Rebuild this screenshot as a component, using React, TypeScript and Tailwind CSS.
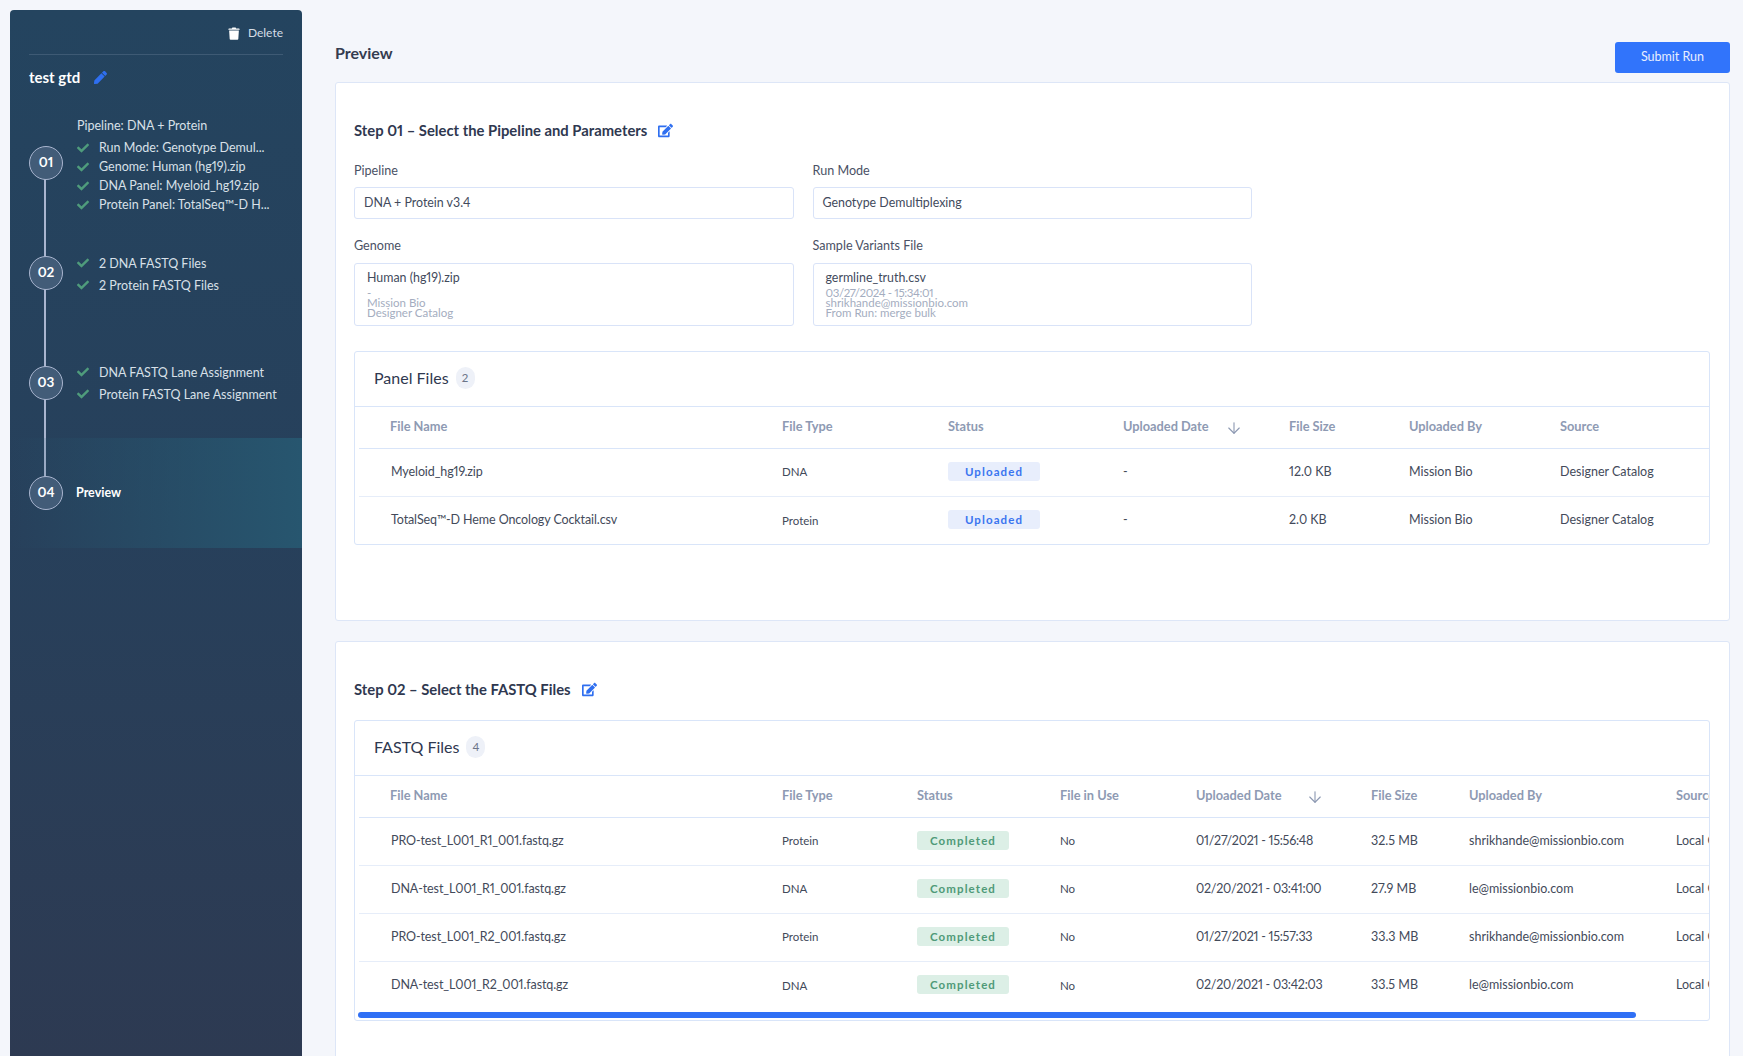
import { ArrowDown } from "lucide-react";
import { FaCheck, FaPen, FaEdit } from "react-icons/fa";

const steps = [
  {
    num: "01",
    lead: "Pipeline: DNA + Protein",
    items: [
      "Run Mode: Genotype Demul...",
      "Genome: Human (hg19).zip",
      "DNA Panel: Myeloid_hg19.zip",
      "Protein Panel: TotalSeq™-D H...",
    ],
    gap: "gap-y-[4px] pt-[4px]",
  },
  { num: "02", items: ["2 DNA FASTQ Files", "2 Protein FASTQ Files"], gap: "gap-y-[7px] pt-[2px]" },
  { num: "03", items: ["DNA FASTQ Lane Assignment", "Protein FASTQ Lane Assignment"], gap: "gap-y-[7px]" },
];

const panelFiles = [
  ["Myeloid_hg19.zip", "DNA", "Uploaded", "-", "12.0 KB", "Mission Bio", "Designer Catalog"],
  ["TotalSeq™-D Heme Oncology Cocktail.csv", "Protein", "Uploaded", "-", "2.0 KB", "Mission Bio", "Designer Catalog"],
];

const fastqFiles = [
  ["PRO-test_L001_R1_001.fastq.gz", "Protein", "Completed", "No", "01/27/2021 - 15:56:48", "32.5 MB", "shrikhande@missionbio.com", "Local Computer"],
  ["DNA-test_L001_R1_001.fastq.gz", "DNA", "Completed", "No", "02/20/2021 - 03:41:00", "27.9 MB", "le@missionbio.com", "Local Computer"],
  ["PRO-test_L001_R2_001.fastq.gz", "Protein", "Completed", "No", "01/27/2021 - 15:57:33", "33.3 MB", "shrikhande@missionbio.com", "Local Computer"],
  ["DNA-test_L001_R2_001.fastq.gz", "DNA", "Completed", "No", "02/20/2021 - 03:42:03", "33.5 MB", "le@missionbio.com", "Local Computer"],
];

const isDate = (text: string) => /^\d\d\/\d\d\//.test(text);

function Trash() {
  return (
    <svg viewBox="0 0 14 16" className="h-[13px] w-[12px] fill-white" aria-hidden="true">
      <path d="M5 0.5h4l.6 1.2H13c.5 0 .9.4.9.9v.7H.1v-.7c0-.5.4-.9.9-.9h3.4L5 .5z" />
      <path d="M1 4.4h12l-.7 10.3c0 .5-.5.9-1 .9H2.7c-.5 0-1-.4-1-.9L1 4.4z" />
    </svg>
  );
}

function Sidebar() {
  return (
    <aside className="mt-[10px] ml-[10px] flex w-[292px] shrink-0 flex-col rounded-t-[4px] bg-gradient-to-b from-[#24445f] via-[#27405b] to-[#2d3a52]">
      <div className="mx-[19px] flex h-[45px] items-center justify-end border-b border-[#3e5a74] pt-[2px]">
        <Trash />
        <span className="ml-[8px] text-[12px] text-[#d5dde6]">Delete</span>
      </div>
      <div className="mt-[11px] ml-[19px] flex items-center">
        <span className="text-[15px] leading-[22px] font-bold text-white">test gtd</span>
        <FaPen className="ml-[14px] h-[13px] w-[13px] text-[#2f6ff0]" />
      </div>
      <div className="relative mt-[20px]">
        <div className="absolute top-[55px] left-[34px] h-[330px] w-[2px] bg-[#a9b5cf]" />
        {steps.map((step) => (
          <div key={step.num} className="relative flex h-[110px] items-center pl-[19px]">
            <StepBadge num={step.num} />
            <div className={`ml-[14px] flex flex-col ${step.gap}`}>
              {step.lead && <div className="mb-[3px] text-[12.5px] leading-[15px] text-[#d8e0e8]">{step.lead}</div>}
              {step.items.map((item) => (
                <div key={item} className="flex items-center text-[12.5px] leading-[15px] whitespace-nowrap text-[#d8e0e8]">
                  <FaCheck className="mr-[10px] h-[12px] w-[12px] text-[#4f9c7c]" />
                  {item}
                </div>
              ))}
            </div>
          </div>
        ))}
        <div className="relative flex h-[110px] items-center bg-gradient-to-r from-transparent to-[#27566f] pl-[19px]">
          <StepBadge num="04" />
          <span className="ml-[13px] text-[12.5px] font-bold text-white">Preview</span>
        </div>
      </div>
    </aside>
  );
}

function StepBadge({ num }: { num: string }) {
  return (
    <div className="flex h-[34px] w-[34px] shrink-0 items-center justify-center rounded-full border border-[#a9b5cf] bg-[#425c78] pb-[2px] text-[13.5px] font-bold text-white">
      {num}
    </div>
  );
}

function Field({ label, value }: { label: string; value: string }) {
  return (
    <div>
      <div className="mb-[8px] text-[12.6px] leading-[16px] text-[#4a5165]">{label}</div>
      <div className="flex h-[32px] items-center rounded-[3px] border border-[#d9e3f8] pl-[9px] text-[12.4px] text-[#424a5c]">{value}</div>
    </div>
  );
}

function FileField({ label, name, lines }: { label: string; name: string; lines: string[] }) {
  return (
    <div>
      <div className="mb-[9px] text-[12.6px] leading-[16px] text-[#4a5165]">{label}</div>
      <div className="h-[63px] rounded-[3px] border border-[#d9e3f8] pt-[6px] pl-[12px]">
        <div className="text-[12.4px] leading-[16px] text-[#424a5c]">{name}</div>
        <div className="mt-[2px] text-[11.5px] leading-[10px] text-[#a4adc0]">
          {lines.map((line) => (
            <div key={line} className={isDate(line) ? "tracking-[-0.4px]" : ""}>
              {line}
            </div>
          ))}
        </div>
      </div>
    </div>
  );
}

function StatusBadge({ label }: { label: string }) {
  const tone = label === "Uploaded" ? "bg-[#e8eefc] text-[#3a75f0]" : "bg-[#dcefe6] text-[#4f9a78]";
  return (
    <span className={`inline-flex h-[19px] w-[92px] items-center justify-center rounded-[3px] text-[11.5px] font-bold tracking-[1.1px] ${tone}`}>
      {label}
    </span>
  );
}

function PanelHeader({ title, count }: { title: string; count: number }) {
  return (
    <div className="flex h-[55px] items-center border-b border-[#d9e5f9] pb-[2px] pl-[19px]">
      <span className="text-[16px] text-[#2f3850]">{title}</span>
      <span className="ml-[7px] flex h-[22px] w-[19px] items-center justify-center rounded-full bg-[#eef1f8] text-[11.5px] text-[#6c7488]">
        {count}
      </span>
    </div>
  );
}

function SortHeader({ gap }: { gap: string }) {
  return (
    <span className="inline-flex items-center">
      Uploaded Date
      <ArrowDown className={`mt-[3px] h-[18px] w-[18px] text-[#8e9ab3] ${gap}`} strokeWidth={1.5} />
    </span>
  );
}

function FileTable({
  widths,
  heads,
  rows,
  badgeCol,
}: {
  widths: string[];
  heads: React.ReactNode[];
  rows: string[][];
  badgeCol: number;
}) {
  return (
    <div className="ml-[4px] overflow-hidden">
      <table className="w-[1350px] table-fixed border-collapse text-left">
        <colgroup>
          {widths.map((w, i) => (
            <col key={i} className={w} />
          ))}
        </colgroup>
        <thead>
          <tr className="h-[41px] border-b border-[#d9e5f9]">
            {heads.map((head, i) => (
              <th key={i} className={`pb-[2px] text-[12.8px] font-bold whitespace-nowrap text-[#8e9ab3] ${i === 0 ? "pl-[31px]" : ""}`}>
                {head}
              </th>
            ))}
          </tr>
        </thead>
        <tbody>
          {rows.map((row, r) => (
            <tr key={r} className={`h-[48px] ${r < rows.length - 1 ? "border-b border-[#e6edf9]" : ""}`}>
              {row.map((cell, i) => (
                <td
                  key={i}
                  className={`whitespace-nowrap text-[#434a5a] ${i === 0 ? "pl-[32px] tracking-[-0.1px]" : ""} ${isDate(cell) ? "tracking-[-0.25px]" : ""} ${i === 1 || cell === "No" ? "text-[11.5px]" : "text-[12.5px]"}`}
                >
                  {i === badgeCol ? <StatusBadge label={cell} /> : cell}
                </td>
              ))}
            </tr>
          ))}
        </tbody>
      </table>
    </div>
  );
}

function StepTitle({ children }: { children: string }) {
  return (
    <div className="flex items-center text-[14.8px] leading-[22px] font-bold text-[#2f3850]">
      {children}
      <FaEdit className="ml-[11px] h-[15px] w-[15px] text-[#2f6ff0]" />
    </div>
  );
}

export default function App() {
  return (
    <div className="flex h-screen overflow-hidden bg-[#f4f6fb] font-['Lato',sans-serif] proportional-nums">
      <Sidebar />
      <main className="flex min-w-0 flex-1 flex-col pr-[13px] pl-[33px]">
        <div className="flex h-[82px] shrink-0 justify-between pt-[42px]">
          <h1 className="-mt-[1px] text-[16px] leading-[24px] font-bold text-[#343c50]">Preview</h1>
          <button type="button" className="h-[31px] w-[115px] rounded-[3px] bg-[#3174fb] text-[12.5px] text-[#e8efff]">
            Submit Run
          </button>
        </div>

        <section className="h-[539px] shrink-0 rounded-[3px] border border-[#dde6f7] bg-white pt-[36px] pr-[19px] pl-[18px]">
          <StepTitle>Step 01 – Select the Pipeline and Parameters</StepTitle>
          <div className="mt-[22px] grid w-[898px] grid-cols-2 gap-x-[19px] gap-y-[19px]">
            <Field label="Pipeline" value="DNA + Protein v3.4" />
            <Field label="Run Mode" value="Genotype Demultiplexing" />
            <FileField label="Genome" name="Human (hg19).zip" lines={["-", "Mission Bio", "Designer Catalog"]} />
            <FileField
              label="Sample Variants File"
              name="germline_truth.csv"
              lines={["03/27/2024 - 15:34:01", "shrikhande@missionbio.com", "From Run: merge bulk"]}
            />
          </div>
          <div className="mt-[25px] h-[194px] rounded-[3px] border border-[#d9e5f9]">
            <PanelHeader title="Panel Files" count={2} />
            <FileTable
              widths={["w-[423px]", "w-[166px]", "w-[175px]", "w-[166px]", "w-[120px]", "w-[151px]", "w-[149px]"]}
              heads={["File Name", "File Type", "Status", <SortHeader gap="ml-[16px]" />, "File Size", "Uploaded By", "Source"]}
              rows={panelFiles}
              badgeCol={2}
            />
          </div>
        </section>

        <section className="mt-[20px] h-[500px] shrink-0 rounded-[3px] border border-[#dde6f7] bg-white pt-[36px] pr-[19px] pl-[18px]">
          <StepTitle>Step 02 – Select the FASTQ Files</StepTitle>
          <div className="mt-[20px] h-[301px] rounded-[3px] border border-[#d9e5f9]">
            <PanelHeader title="FASTQ Files" count={4} />
            <FileTable
              widths={["w-[423px]", "w-[135px]", "w-[143px]", "w-[136px]", "w-[175px]", "w-[98px]", "w-[207px]", "w-[33px]"]}
              heads={["File Name", "File Type", "Status", "File in Use", <SortHeader gap="ml-[24px]" />, "File Size", "Uploaded By", "Source"]}
              rows={fastqFiles}
              badgeCol={2}
            />
            <div className="mt-[3px] ml-[3px] h-[6px] w-[1278px] rounded-full bg-[#3070f5]" />
          </div>
        </section>
      </main>
    </div>
  );
}
